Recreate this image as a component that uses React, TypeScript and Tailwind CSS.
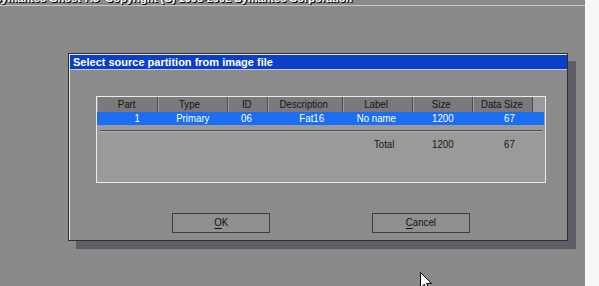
import React from "react";

const font = { fontFamily: "'Liberation Sans Narrow', 'Liberation Sans', Arial, sans-serif" };

const cols = [61, 70, 40, 75, 70, 60, 60];
const headers = ["Part", "Type", "ID", "Description", "Label", "Size", "Data Size"];
const headerOffsets = [0, -3, -1, -1, -1, -1, -1];
const rowVals = ["1", "Primary", "06", "Fat16", "No name", "1200", "67"];
const rowOffsets = [10, 0, -2, 6, -2, 0, 6];

function Cell({ w, off, children, className = "" }: { w: number; off: number; children?: React.ReactNode; className?: string }) {
  return (
    <div className={`flex items-center justify-center shrink-0 ${className}`} style={{ width: w }}>
      <span className="inline-block whitespace-nowrap" style={{ transform: `translateX(${off}px) scaleX(0.84)` }}>
        {children}
      </span>
    </div>
  );
}

export default function App() {
  return (
    <div className="relative w-[599px] h-[286px] flex bg-[#f6f6f6] overflow-hidden">
      <div className="w-[585px] h-full bg-[#8a8a8a] flex flex-col">
        {/* top cut-off header text */}
        <div className="h-[5px] overflow-hidden relative">
          <div
            className="absolute left-[-6px] top-[-8px] whitespace-nowrap text-[11px] leading-[12px] font-bold text-white [text-shadow:1px_1px_0_#000]"
            style={{ fontFamily: "'Liberation Sans', Arial, sans-serif" }}
          >
            Symantec Ghost 7.5&nbsp;&nbsp;Copyright (C) 1998-2002 Symantec Corporation
          </div>
        </div>
        <div className="h-px bg-[#c9c9c9]" />

        {/* dialog */}
        <div className="ml-[68px] mt-[47px] w-[500px] h-[188px] border border-[#2f2f2f] bg-[#8b8b8b] shadow-[8px_8px_0_#625c66] flex flex-col">
          <div className="flex-1 flex flex-col border-l border-t border-[#e6e6e6]">
            <div className="h-[15px] bg-[#0c3fc9] border-b border-[#b9cde6] flex items-center pl-[3px]">
              <span
                className="text-[11px] font-bold text-white leading-none"
                style={{ fontFamily: "'Liberation Sans', Arial, sans-serif" }}
              >
                Select source partition from image file
              </span>
            </div>

            {/* table box */}
            <div
              className="ml-[26px] mt-[26px] w-[450px] h-[87px] border border-[#ececec] bg-[#9a9a9a] flex flex-col text-[11.5px] leading-none"
              style={font}
            >
              <div className="h-[15px] flex text-[#141414]">
                {cols.map((w, i) => (
                  <Cell
                    key={i}
                    w={w}
                    off={headerOffsets[i]}
                    className="bg-[#7a7a7a] border-r border-[#4c4c4c] shadow-[inset_1px_0_0_#9c9c9c]"
                  >
                    {headers[i]}
                  </Cell>
                ))}
              </div>
              <div className="h-[13px] mr-px bg-[#1b6df2] flex text-white">
                {cols.map((w, i) => (
                  <Cell key={i} w={w} off={rowOffsets[i]}>
                    {rowVals[i]}
                  </Cell>
                ))}
              </div>
              <div className="mt-[5px] mx-[3px] h-px bg-[#4e4e4e]" />
              <div className="h-px mx-[3px] bg-[#b0b0b0]" />
              <div className="mt-[6px] h-[14px] flex text-[#141414]">
                <Cell w={61} off={0} />
                <Cell w={70} off={0} />
                <Cell w={40} off={0} />
                <Cell w={75} off={0} />
                <Cell w={70} off={6}>Total</Cell>
                <Cell w={60} off={0}>1200</Cell>
                <Cell w={60} off={6}>67</Cell>
              </div>
            </div>

            {/* buttons */}
            <div className="mt-[30px] ml-[102px] flex gap-[102px]">
              <button
                className="w-[98px] h-[20px] border border-[#3e3e3e] bg-[#8f8f8f] text-[11.5px] text-[#111] leading-none flex items-center justify-center"
                style={font}
              >
                <span className="inline-block scale-x-[0.84]">
                  <span className="underline underline-offset-2">O</span>K
                </span>
              </button>
              <button
                className="w-[98px] h-[20px] border border-[#3e3e3e] bg-[#8f8f8f] text-[11.5px] text-[#111] leading-none flex items-center justify-center"
                style={font}
              >
                <span className="inline-block scale-x-[0.84]">
                  <span className="underline underline-offset-2">C</span>ancel
                </span>
              </button>
            </div>
          </div>
        </div>
      </div>

      {/* mouse cursor */}
      <svg className="absolute left-[420px] top-[272px]" width="14" height="20" viewBox="0 0 14 20">
        <path d="M0.5 0.5 L0.5 16 L4.2 12.3 L7 18.5 L9.3 17.5 L6.6 11.4 L11.5 11.4 Z" fill="#fff" stroke="#000" strokeWidth="1" />
      </svg>
    </div>
  );
}
